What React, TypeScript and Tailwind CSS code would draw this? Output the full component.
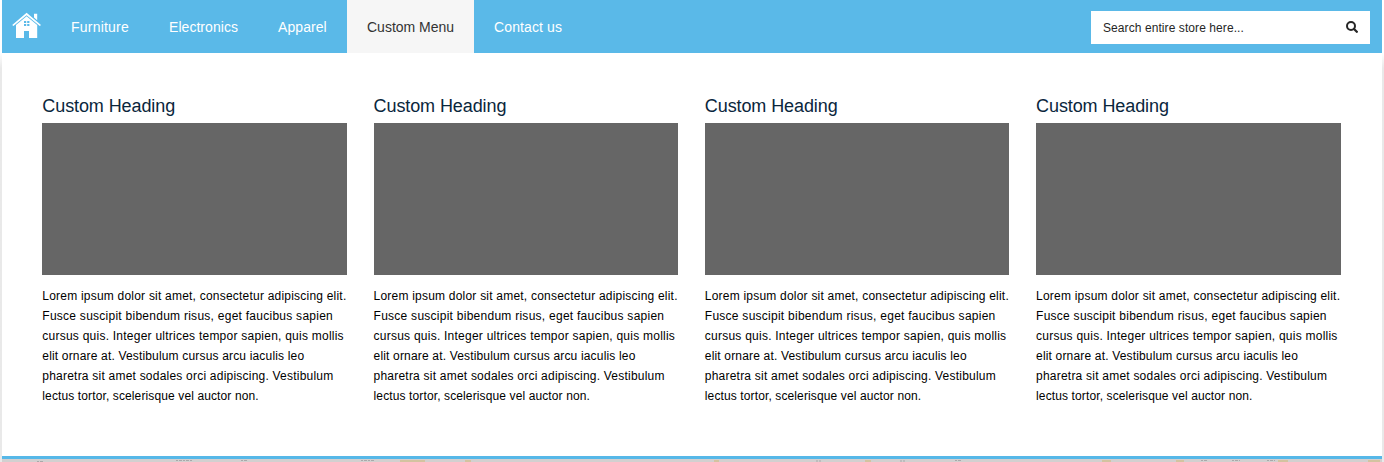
const navItems = [
  { label: 'Furniture', style: 'w-[98px] tracking-[0.22px] text-white' },
  { label: 'Electronics', style: 'w-[109px] tracking-[0.05px] text-white' },
  { label: 'Apparel', style: 'w-[89px] tracking-[0.08px] text-white' },
  { label: 'Custom Menu', style: 'w-[127px] bg-[#f6f6f6] text-[#333333]' },
  { label: 'Contact us', style: 'w-[108px] tracking-[0.12px] text-white' },
];

const lines = [
  { text: 'Lorem ipsum dolor sit amet, consectetur adipiscing elit.', tracking: 'tracking-[0.215px]' },
  { text: 'Fusce suscipit bibendum risus, eget faucibus sapien', tracking: 'tracking-[0.26px]' },
  { text: 'cursus quis. Integer ultrices tempor sapien, quis mollis', tracking: 'tracking-[0.24px]' },
  { text: 'elit ornare at. Vestibulum cursus arcu iaculis leo', tracking: 'tracking-[0.17px]' },
  { text: 'pharetra sit amet sodales orci adipiscing. Vestibulum', tracking: 'tracking-[0.22px]' },
  { text: 'lectus tortor, scelerisque vel auctor non.', tracking: 'tracking-[0.12px]' },
];

function HomeIcon() {
  return (
    <svg width="30" height="26" viewBox="0 0 30 26" className="shrink-0">
      <path fill="#fff" d="M22 1.8h3.2v6.4L22 5.4z" />
      <path fill="#fff" d="M14.6 .8 29 13 27.8 14 14.6 3.2 1.4 14 .2 13z" />
      <path fill="#fff" d="M14.6 4.2 25.2 13V26H17V19H12V26H4V13z" />
      <path fill="#5ab9e8" d="M12 9h2.2v2H12zM15.2 9h2.2v2h-2.2zM12 12h2.2v2H12zM15.2 12h2.2v2h-2.2z" />
    </svg>
  );
}

function SearchIcon() {
  return (
    <svg width="12" height="12" viewBox="0 0 12 12" fill="none" stroke="#262626" className="-mt-[2px]">
      <circle cx="5" cy="5" r="4" strokeWidth="2" />
      <path d="m8 8 2.8 2.8" strokeWidth="2.3" strokeLinecap="round" />
    </svg>
  );
}

function Column() {
  return (
    <section>
      <h2 className="h-[30px] text-[18px] leading-[26px] tracking-[-0.09px] text-[#0a263c]">Custom Heading</h2>
      <div className="h-[152px] bg-[#666666]" />
      <p className="mt-[11px] text-[12px] leading-[20px] whitespace-nowrap text-black">
        {lines.map((line) => (
          <span key={line.text} className={`block ${line.tracking}`}>{line.text}</span>
        ))}
      </p>
    </section>
  );
}

function Backdrop() {
  return (
    <svg width="1380" height="3" viewBox="0 0 1380 3" className="block bg-[#d2d0d0]">
      <path stroke="#a9a9aa" strokeWidth="1" strokeDasharray="2 1 3 1" d="M35 2.5h7M174 1.5h16M239 1.5h7M359 1.5h14M814 2h5M898 2h5M953 1.5h7M1199 1.5h6M1230 1.5h8M1265 1.5h8" />
      <path stroke="#d3c3a0" strokeWidth="2" d="M398 2h25M463 2h6M712 2h5M863 2h6M1100 2h9M1174 2h8M1276 2h10M1366 2h12" />
    </svg>
  );
}

export default function App() {
  return (
    <div className="h-[462px] overflow-hidden bg-linear-to-b from-white from-[53px] to-[#e9e9e9] to-[68px] px-[2px] font-['Liberation_Sans',Arial,sans-serif]">
      <header className="flex h-[53px] bg-[#5ab9e8]">
        <a href="#" aria-label="Home" className="flex w-[49px] shrink-0 pt-[12px] pl-[10px]">
          <HomeIcon />
        </a>
        <nav className="flex">
          {navItems.map((item) => (
            <a
              key={item.label}
              href="#"
              className={`px-[20px] text-[14px] leading-[54px] whitespace-nowrap ${item.style}`}
            >
              {item.label}
            </a>
          ))}
        </nav>
        <div className="mt-[11px] mr-[12px] ml-auto flex h-[33px] w-[279px] items-center justify-between bg-white px-[12px]">
          <span className="text-[12px] tracking-[0.08px] text-[#262626]">Search entire store here...</span>
          <SearchIcon />
        </div>
      </header>
      <main className="grid h-[406px] grid-cols-4 gap-[26.65px] border-b-[3px] border-[#56b8e8] bg-white pt-[40px] pr-[41.35px] pl-[40.3px]">
        <Column />
        <Column />
        <Column />
        <Column />
      </main>
      <Backdrop />
    </div>
  );
}
